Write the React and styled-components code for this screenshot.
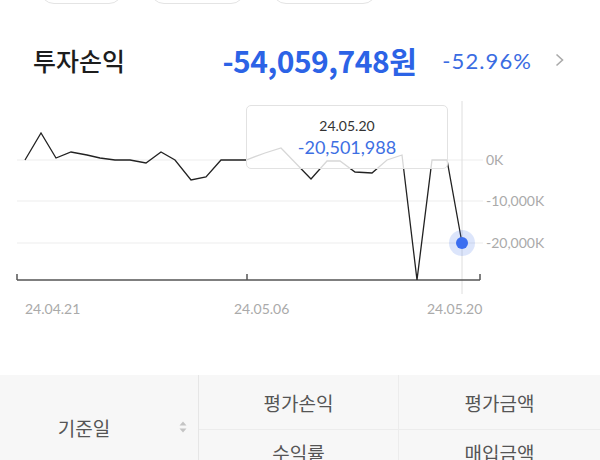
import styled, { createGlobalStyle } from 'styled-components';

const GlobalStyle = createGlobalStyle`
  body {
    margin: 0;
    background: #fff;
    font-family: "Noto Sans CJK KR", "Noto Sans", sans-serif;
  }
`;

const Page = styled.div`
  width: 600px;
  height: 460px;
  overflow: hidden;
  background: #fff;
`;

const PillRow = styled.div`
  display: flex;
  margin-top: -32px;
  padding-left: 40px;
  gap: 27px;
`;

const Pill = styled.div`
  width: ${p => p.$w}px;
  height: 36px;
  box-sizing: border-box;
  border: 1.5px solid #e4e4e4;
  border-radius: 14px;
`;

const Header = styled.div`
  display: flex;
  align-items: center;
  height: 52px;
  margin-top: 30px;
  padding: 0 36px 0 33px;
`;

const Title = styled.div`
  font-size: 25px;
  font-weight: 500;
  color: #1d1d1d;
  flex: 1;
`;

const Amount = styled.div`
  font-size: 30px;
  font-weight: 700;
  color: #2c63e6;
  letter-spacing: -0.5px;
`;

const Rate = styled.div`
  font-family: Lato, "Noto Sans", sans-serif;
  font-size: 22px;
  letter-spacing: 1.1px;
  color: #3a6ce2;
  margin-left: 26px;
`;

const Chevron = styled.div`
  margin-left: 23px;
  display: flex;
  align-items: center;
`;

const ChartWrap = styled.div`
  position: relative;
  height: 244px;
`;

const Tooltip = styled.div`
  position: absolute;
  left: 246px;
  top: 19px;
  width: 202px;
  height: 64px;
  box-sizing: border-box;
  border: 1px solid #e2e2e2;
  border-radius: 5px;
  background: rgba(255, 255, 255, 0.82);
  display: flex;
  flex-direction: column;
  align-items: center;
  padding-top: 11px;
  font-family: Lato, "Noto Sans", sans-serif;
`;

const TipDate = styled.div`
  font-size: 14px;
  color: #333;
  line-height: 18px;
`;

const TipValue = styled.div`
  font-size: 18px;
  color: #3d6fe3;
  line-height: 24px;
`;

const Table = styled.div`
  margin-top: 45px;
  display: grid;
  grid-template-columns: 199px 199px 1fr;
  grid-template-rows: 55px 55px;
  background: #f7f7f7;
`;

const KeyCell = styled.div`
  grid-row: 1 / span 2;
  display: flex;
  align-items: center;
  border-right: 1px solid #e6e6e6;
  font-size: 19px;
  color: #555;
`;

const KeyLabel = styled.div`
  flex: 1;
  text-align: center;
  margin-top: -6px;
`;

const SortIcon = styled.div`
  width: 30px;
  display: flex;
  justify-content: center;
  margin-top: -6px;
`;

const HeadCell = styled.div`
  display: flex;
  align-items: center;
  justify-content: center;
  font-size: 19px;
  color: #555;
  padding-bottom: ${p => (p.$top ? 0 : 10)}px;
  border-left: ${p => (p.$divider ? '1px solid #ececec' : 'none')};
  border-bottom: ${p => (p.$top ? '1px solid #ececec' : 'none')};
`;

const points = [
  [25, 160], [41, 133], [56, 158], [71, 152], [87, 155], [100, 158], [115, 160],
  [130, 160], [146, 163], [161, 152], [175, 160], [191, 180], [206, 177], [221, 160],
  [246, 160], [265, 153], [281, 148], [311, 179], [327, 161], [340, 161], [355, 172],
  [372, 173], [387, 160], [402, 155], [417, 280], [432, 160], [447, 160], [462, 243],
];

const yTicks = [
  { y: 160, label: '0K' },
  { y: 201, label: '-10,000K' },
  { y: 243, label: '-20,000K' },
];

const xTicks = [
  { x: 17, lx: 25, label: '24.04.21' },
  { x: 247, lx: 234, label: '24.05.06' },
  { x: 480, lx: 427, label: '24.05.20' },
];

const Chart = () => (
  <svg width="600" height="244" viewBox="0 86 600 244" style={{ display: 'block' }}>
    {yTicks.map(t => (
      <g key={t.label}>
        <line x1="17" x2="483" y1={t.y} y2={t.y} stroke="#ededed" strokeWidth="1" />
        <text x="486" y={t.y + 5} fontFamily="Lato, sans-serif" fontSize="14" fill="#aaa">
          {t.label}
        </text>
      </g>
    ))}
    <line x1="462" x2="462" y1="101" y2="294" stroke="#dedede" strokeWidth="1" />
    <line x1="17" x2="480" y1="280" y2="280" stroke="#555" strokeWidth="1.5" />
    {xTicks.map(t => (
      <g key={t.label}>
        <line x1={t.x} x2={t.x} y1="274" y2="280" stroke="#555" strokeWidth="1.5" />
        <text x={t.lx} y="314" fontFamily="Lato, sans-serif" fontSize="14" fill="#aaa">
          {t.label}
        </text>
      </g>
    ))}
    <polyline
      points={points.map(p => p.join(',')).join(' ')}
      fill="none"
      stroke="#222"
      strokeWidth="1.3"
      strokeLinejoin="miter"
    />
    <circle cx="462" cy="243" r="13" fill="#3d6fe8" opacity="0.18" />
    <circle cx="462" cy="243" r="6" fill="#3b6ef0" />
  </svg>
);

export default function App() {
  return (
    <Page>
      <GlobalStyle />
      <PillRow>
        <Pill $w={83} />
        <Pill $w={95} />
        <Pill $w={105} />
      </PillRow>
      <Header>
        <Title>투자손익</Title>
        <Amount>-54,059,748원</Amount>
        <Rate>-52.96%</Rate>
        <Chevron>
          <svg width="9" height="14" viewBox="0 0 9 14">
            <path d="M1.5 1.5 L7.5 7 L1.5 12.5" fill="none" stroke="#aaa" strokeWidth="1.6" />
          </svg>
        </Chevron>
      </Header>
      <ChartWrap>
        <Chart />
        <Tooltip>
          <TipDate>24.05.20</TipDate>
          <TipValue>-20,501,988</TipValue>
        </Tooltip>
      </ChartWrap>
      <Table>
        <KeyCell>
          <KeyLabel>기준일</KeyLabel>
          <SortIcon>
            <svg width="8" height="12" viewBox="0 0 8 12">
              <path d="M4 0.5 L7.5 4.5 H0.5 Z" fill="#c4c4c4" />
              <path d="M4 11.5 L7.5 7.5 H0.5 Z" fill="#c4c4c4" />
            </svg>
          </SortIcon>
        </KeyCell>
        <HeadCell $top>평가손익</HeadCell>
        <HeadCell $top $divider>평가금액</HeadCell>
        <HeadCell>수익률</HeadCell>
        <HeadCell $divider>매입금액</HeadCell>
      </Table>
    </Page>
  );
}
